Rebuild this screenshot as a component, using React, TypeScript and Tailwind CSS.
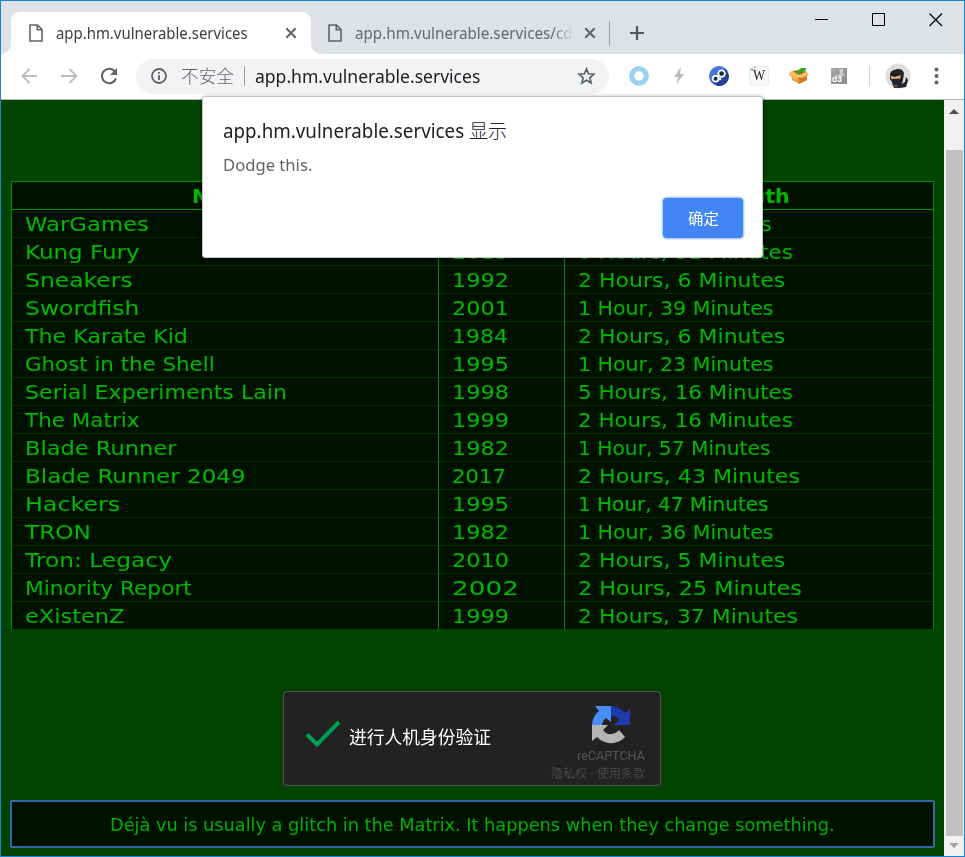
import { useLayoutEffect, useRef, useState } from "react";
import type { ReactNode } from "react";

type FitProps = { w: number; className?: string; children: ReactNode };

/** Single line of text stretched horizontally to a given width. */
function Fit({ w, className = "", children }: FitProps) {
  const ref = useRef<HTMLSpanElement>(null);
  const [scale, setScale] = useState(1);
  useLayoutEffect(() => {
    if (ref.current) setScale(w / ref.current.offsetWidth);
  }, [w]);
  return (
    <span className={`block shrink-0 whitespace-nowrap ${className}`} style={{ width: w }}>
      <span ref={ref} className="inline-block origin-left" style={{ transform: `scaleX(${scale})` }}>
        {children}
      </span>
    </span>
  );
}

const UI = "font-['Noto_Sans','Noto_Sans_CJK_SC',sans-serif]";
const TECH = "font-['DejaVu_Sans',sans-serif]";

type Movie = [string, number, string, number, string, number];
const movies: Movie[] = [
  ["WarGames", 124, "1983", 57, "1 Hour, 54 Minutes", 194],
  ["Kung Fury", 115, "2015", 57, "0 Hours, 31 Minutes", 215],
  ["Sneakers", 108, "1992", 57, "2 Hours, 6 Minutes", 207],
  ["Swordfish", 115, "2001", 57, "1 Hour, 39 Minutes", 196],
  ["The Karate Kid", 163, "1984", 56, "2 Hours, 6 Minutes", 207],
  ["Ghost in the Shell", 190, "1995", 57, "1 Hour, 23 Minutes", 196],
  ["Serial Experiments Lain", 262, "1998", 57, "5 Hours, 16 Minutes", 215],
  ["The Matrix", 115, "1999", 57, "2 Hours, 16 Minutes", 215],
  ["Blade Runner", 151, "1982", 57, "1 Hour, 57 Minutes", 193],
  ["Blade Runner 2049", 221, "2017", 54, "2 Hours, 43 Minutes", 222],
  ["Hackers", 95, "1995", 57, "1 Hour, 47 Minutes", 191],
  ["TRON", 66, "1982", 57, "1 Hour, 36 Minutes", 196],
  ["Tron: Legacy", 147, "2010", 57, "2 Hours, 5 Minutes", 207],
  ["Minority Report", 167, "2002", 67, "2 Hours, 25 Minutes", 224],
  ["eXistenZ", 100, "1999", 57, "2 Hours, 37 Minutes", 220],
];

const PageIcon = () => (
  <svg width="14" height="18" viewBox="0 0 14 18" fill="none" stroke="#5f6368" strokeWidth="1.6" className="shrink-0">
    <path d="M1 1h7.500L13 5.500V17H1z" />
    <path d="M8.300 1v4.800H13" />
  </svg>
);

const CloseIcon = () => (
  <svg width="12" height="12" viewBox="0 0 12 12" stroke="#5f6368" strokeWidth="2" className="shrink-0">
    <path d="M1.300 1.300l9.400 9.400M10.700 1.300l-9.400 9.400" />
  </svg>
);

function TabStrip() {
  return (
    <div className="flex h-[53px] items-end bg-[#dee1e6]">
      <div className="relative ml-[10px] flex h-[42px] w-[300px] items-center rounded-t-[9px] bg-white pl-[18px]">
        <svg width="10" height="10" viewBox="0 0 10 10" className="absolute bottom-0 -left-[10px]">
          <path d="M10 0v10H0A10 10 0 0 0 10 0z" fill="#fff" />
        </svg>
        <svg width="10" height="10" viewBox="0 0 10 10" className="absolute bottom-0 -right-[10px]">
          <path d="M0 0v10h10A10 10 0 0 1 0 0z" fill="#fff" />
        </svg>
        <PageIcon />
        <Fit w={192} className="ml-[13px] text-[16px] leading-[42px] text-[#3c4043]">app.hm.vulnerable.services</Fit>
        <div className="ml-[37px]"><CloseIcon /></div>
      </div>
      <div className="flex h-[42px] items-center pl-[17px]">
        <PageIcon />
        <div className="ml-[13px] w-[219px] overflow-hidden [mask-image:linear-gradient(to_right,black_90%,transparent)]">
          <Fit w={227} className="text-[16px] leading-[42px] text-[#66696e]">app.hm.vulnerable.services/cdn</Fit>
        </div>
        <div className="ml-[10px]"><CloseIcon /></div>
        <div className="ml-[13px] h-[25px] w-px bg-[#9b9ea3]" />
        <svg width="16" height="16" viewBox="0 0 16 16" stroke="#54575c" strokeWidth="2.200" className="ml-[19px]">
          <path d="M8 1v14M1 8h14" />
        </svg>
      </div>
      <div className="mr-[21px] mb-[27px] ml-auto flex items-center gap-[43px]">
        <svg width="14" height="14" viewBox="0 0 14 14"><path d="M0 6.500h13" stroke="#000" /></svg>
        <svg width="14" height="14" viewBox="0 0 14 14"><path d="M.5.5h12v12H.5z" fill="none" stroke="#000" /></svg>
        <svg width="14" height="14" viewBox="0 0 14 14"><path d="M.5.5l12.500 12.500M13 .5L.5 13" stroke="#000" strokeWidth="1.200" /></svg>
      </div>
    </div>
  );
}

function Extensions() {
  return (
    <div className="ml-[19px] flex items-center">
      <svg width="22" height="22" viewBox="0 0 22 22"><circle cx="11" cy="11" r="7.300" fill="#fff" stroke="#9fd1f2" strokeWidth="5.200" /></svg>
      <svg width="12" height="18" viewBox="0 0 12 18" className="ml-[23px]"><path d="M8 0L1 10h4l-1.500 7L11 7H7z" fill="#b9babd" /></svg>
      <svg width="20" height="20" viewBox="0 0 20 20" className="ml-[24px]">
        <circle cx="10" cy="10" r="10" fill="#4575d6" />
        <path d="M2 15L17 3l3 7a10 10 0 0 1-12 9.800z" fill="#234093" />
        <g fill="#1b2744" stroke="#fff" strokeWidth="1.800"><circle cx="6.600" cy="12.800" r="2.900" /><circle cx="12.600" cy="7.600" r="3.300" /></g>
        <circle cx="11" cy="13" r="1.300" fill="#fff" />
      </svg>
      <div className="relative ml-[20px] flex h-[20px] w-[20px] items-center justify-center rounded-[3px] border border-[#ececec] bg-[#f7f7f5] font-['Liberation_Serif',serif] text-[14px] leading-none text-[#222]">
        <Fit w={12}>W</Fit>
        <svg width="8" height="6" viewBox="0 0 8 6" className="absolute -top-px left-0">
          <circle cx="2" cy="3.500" r="1.200" fill="#44bfd5" /><circle cx="4.600" cy="1.500" r=".8" fill="#e857a0" /><circle cx="5" cy="4" r=".8" fill="#e67c48" />
        </svg>
      </div>
      <svg width="20" height="18" viewBox="0 0 20 18" className="ml-[20px]">
        <path d="M2 7l8 3 8-3v6l-8 4-7-4z" fill="#e9a23b" />
        <path d="M10 10l8-3v6l-8 4z" fill="#cb7b22" />
        <path d="M0 6l4-3 6 4-1 4-3 1-6-4zM10 10l1-3 6-3 3 4-7 3z" fill="#f4bd60" />
        <path d="M4 4l7-1 5 2-6 3z" fill="#9d591b" />
        <path d="M8 7c0-4 2-5 4-5l-1-1 6 0-1 5-2-2c-2 0-2 2-3 3z" fill="#38a925" />
      </svg>
      <div className="relative ml-[22px] flex h-[16px] w-[16px] items-end bg-[linear-gradient(135deg,#aaa,#888)] pl-px font-['Liberation_Sans',sans-serif] text-[8.500px] leading-[9px] font-bold text-white">
        d3
        <svg width="8" height="9" viewBox="0 0 8 9" className="absolute top-0 right-[2px]"><path d="M2 1h4v4l2 3H1l2-3z" fill="#ccc" /></svg>
      </div>
      <div className="ml-[22px] h-[20px] w-px bg-[#cfd1d4]" />
      <svg width="26" height="26" viewBox="0 0 26 26" className="ml-[15px]">
        <circle cx="13" cy="13" r="12.500" fill="#dedede" />
        <path d="M5 12Q5 8 9 7q8-3 10 3l-1 7-1 4 3-2 1-5 2 3-2 7-6 1H9l-2-6-2-3z" fill="#20252b" />
        <path d="M5.500 12.500l10-.5v3.500l-9 .5z" fill="#e9ae87" />
        <path d="M5.500 12.500l4 1.500 6-2v-1H6z" fill="#15191e" />
        <path d="M7 21l6 1v2.500H9z" fill="#6c412e" />
      </svg>
      <svg width="5" height="18" viewBox="0 0 5 18" fill="#5f6368" className="ml-[23px]">
        <circle cx="2.500" cy="2.500" r="2" /><circle cx="2.500" cy="9" r="2" /><circle cx="2.500" cy="15.500" r="2" />
      </svg>
    </div>
  );
}

function Toolbar() {
  return (
    <div className="flex h-[46px] items-center border-b border-[#b6b4b6] bg-white pb-px pl-[20px]">
      <svg width="17" height="16" viewBox="0 0 17 16" fill="none" stroke="#babcbe" strokeWidth="1.800"><path d="M16 8H1.500M8.500 1l-7 7 7 7" /></svg>
      <svg width="17" height="16" viewBox="0 0 17 16" fill="none" stroke="#babcbe" strokeWidth="1.800" className="ml-[23px]"><path d="M0 8h15.500M8.500 1l7 7-7 7" /></svg>
      <svg width="18" height="18" viewBox="0 0 18 18" fill="none" className="ml-[22px]">
        <path d="M14.900 4.600A7.200 7.200 0 1 0 16 11.300" stroke="#5f6368" strokeWidth="2.100" /><path d="M17 1v7h-7z" fill="#5f6368" />
      </svg>
      <div className="ml-[18px] flex h-[35px] w-[473px] items-center rounded-full bg-[#f1f3f4] pl-[15px]">
        <svg width="16" height="16" viewBox="0 0 16 16" fill="none" stroke="#5f6368" strokeWidth="1.800" className="shrink-0"><circle cx="8" cy="8" r="7" /><path d="M8 7v5M8 4v1.700" /></svg>
        <Fit w={53} className="ml-[14px] text-[18px] leading-[35px] font-light text-[#5f6368]">不安全</Fit>
        <div className="ml-[10px] h-[20px] w-px shrink-0 bg-[#9b9da0]" />
        <Fit w={225} className="ml-[10px] text-[18px] leading-[35px] text-[#202124]">app.hm.vulnerable.services</Fit>
        <svg width="19" height="18" viewBox="0 0 19 18" fill="none" stroke="#5f6368" strokeWidth="1.700" className="ml-[97px]"><path d="M9.500 1.800l2.100 5 5.400.4-4.100 3.600 1.200 5.300-4.600-2.800-4.600 2.800 1.200-5.300L2 7.200l5.400-.4z" /></svg>
      </div>
      <Extensions />
    </div>
  );
}

function MovieTable() {
  return (
    <div className={`mt-[81px] ml-[10px] h-[448px] w-[923px] overflow-hidden border border-b-0 border-[#008f00] bg-[#001100] text-[20px] text-[#00b800] ${TECH}`}>
      <div className="grid h-[28px] grid-cols-[427px_126px_1fr] border-b border-[#009900] leading-[29px] font-bold">
        <div className="flex justify-center border-r border-[#008f00]"><Fit w={66}>Name</Fit></div>
        <div className="flex justify-center border-r border-[#008f00]"><Fit w={55}>Year</Fit></div>
        <div className="flex justify-center"><Fit w={81}>Length</Fit></div>
      </div>
      {movies.map(([name, nw, year, yw, length, lw]) => (
        <div key={name} className="grid h-[28px] grid-cols-[427px_126px_1fr] leading-[29px]">
          <div className="h-[28px] border-r border-b border-r-[#008f00] border-b-[#003000] pl-[13px]"><Fit w={nw}>{name}</Fit></div>
          <div className="h-[28px] border-r border-b border-r-[#008f00] border-b-[#003000] pl-[13px]"><Fit w={yw}>{year}</Fit></div>
          <div className="h-[28px] border-b border-[#003000] pl-[13px]"><Fit w={lw}>{length}</Fit></div>
        </div>
      ))}
    </div>
  );
}

function Captcha() {
  return (
    <div className="mt-[62px] ml-[282px] flex h-[95px] w-[378px] rounded-[4px] border border-[#525252] bg-[#222]">
      <svg width="36" height="28" viewBox="0 0 36 28" className="mt-[28px] ml-[21px]"><path d="M2 14.500l10 10L34 2" fill="none" stroke="#009e55" strokeWidth="4" /></svg>
      <Fit w={142} className="mt-[31px] ml-[8px] text-[18px] leading-[28px] text-white">进行人机身份验证</Fit>
      <div className="mr-[15px] ml-auto flex flex-col items-end pt-[14px] text-[#555]">
        <svg width="38" height="38" viewBox="0 0 38 38" className="mr-[15px]">
          <path d="M19 0A19 19 0 0 1 33 7l5-4v16H22l5-5a9 9 0 0 0-8-4z" fill="#1c3aa9" />
          <path d="M19 0v16l-5-4a10 10 0 0 0-4 7H0A19 19 0 0 1 7 5L3 0z" fill="#4b8df8" />
          <path d="M0 19h16l-5 5c4 6 12 5 16 0l6 7A19 19 0 0 1 5 31L0 35z" fill="#b5b5b5" />
        </svg>
        <Fit w={68} className="mt-[4px] font-['Roboto',sans-serif] text-[12px] leading-[16px]">reCAPTCHA</Fit>
        <Fit w={94} className="mt-[1px] text-[12px] leading-[18px] font-light">隐私权 - 使用条款</Fit>
      </div>
    </div>
  );
}

function AlertDialog() {
  return (
    <div className="absolute top-[95px] left-[201px] flex h-[162px] w-[561px] flex-col rounded-[3px] border border-[#c5c5c5] bg-white shadow-[0_1px_5px_rgba(0,0,0,0.35)]">
      <div className="flex items-center pt-[20px] pl-[20px] leading-[28px] text-[#202124]">
        <Fit w={241} className="text-[19px]">app.hm.vulnerable.services</Fit>
        <Fit w={38} className="ml-[5px] text-[19px] font-light">显示</Fit>
      </div>
      <Fit w={89} className="mt-[7px] ml-[20px] text-[17px] leading-[26px] text-[#5f6368]">Dodge this.</Fit>
      <button className="mt-[20px] mr-[19px] flex h-[40px] w-[80px] items-center justify-center self-end rounded-[4px] bg-[#4285f4] text-white shadow-[0_0_0_1.500px_#b5cffb]">
        <Fit w={31} className="text-[15px] leading-[20px]">确定</Fit>
      </button>
    </div>
  );
}

export default function App() {
  return (
    <div className={`relative flex h-[857px] w-[965px] flex-col overflow-hidden border border-[#1883d7] bg-white ${UI}`}>
      <TabStrip />
      <Toolbar />
      <div className="flex min-h-0 flex-1">
        <main className="w-[943px] shrink-0 overflow-hidden bg-[#004400]">
          <MovieTable />
          <Captcha />
          <div className={`mt-[14px] ml-[9px] flex h-[48px] w-[925px] items-center justify-center rounded-[2px] border-2 border-[#3465a4] bg-[#001100] pt-[2px] text-[17.500px] text-[#00b000] ${TECH}`}>
            <Fit w={725}>Déjà vu is usually a glitch in the Matrix. It happens when they change something.</Fit>
          </div>
        </main>
        <aside className="flex flex-1 flex-col items-center justify-between bg-[#f1f1f1] pb-[8px]">
          <svg width="10" height="5" viewBox="0 0 10 5" className="mt-[9px] shrink-0"><path d="M5 0l5 5H0z" fill="#505050" /></svg>
          <div className="mt-[36px] mb-[7px] w-[17px] flex-1 bg-[#c1c1c1]" />
          <svg width="10" height="5" viewBox="0 0 10 5" className="shrink-0"><path d="M0 0h10L5 5z" fill="#a3a3a3" /></svg>
        </aside>
      </div>
      <AlertDialog />
    </div>
  );
}
